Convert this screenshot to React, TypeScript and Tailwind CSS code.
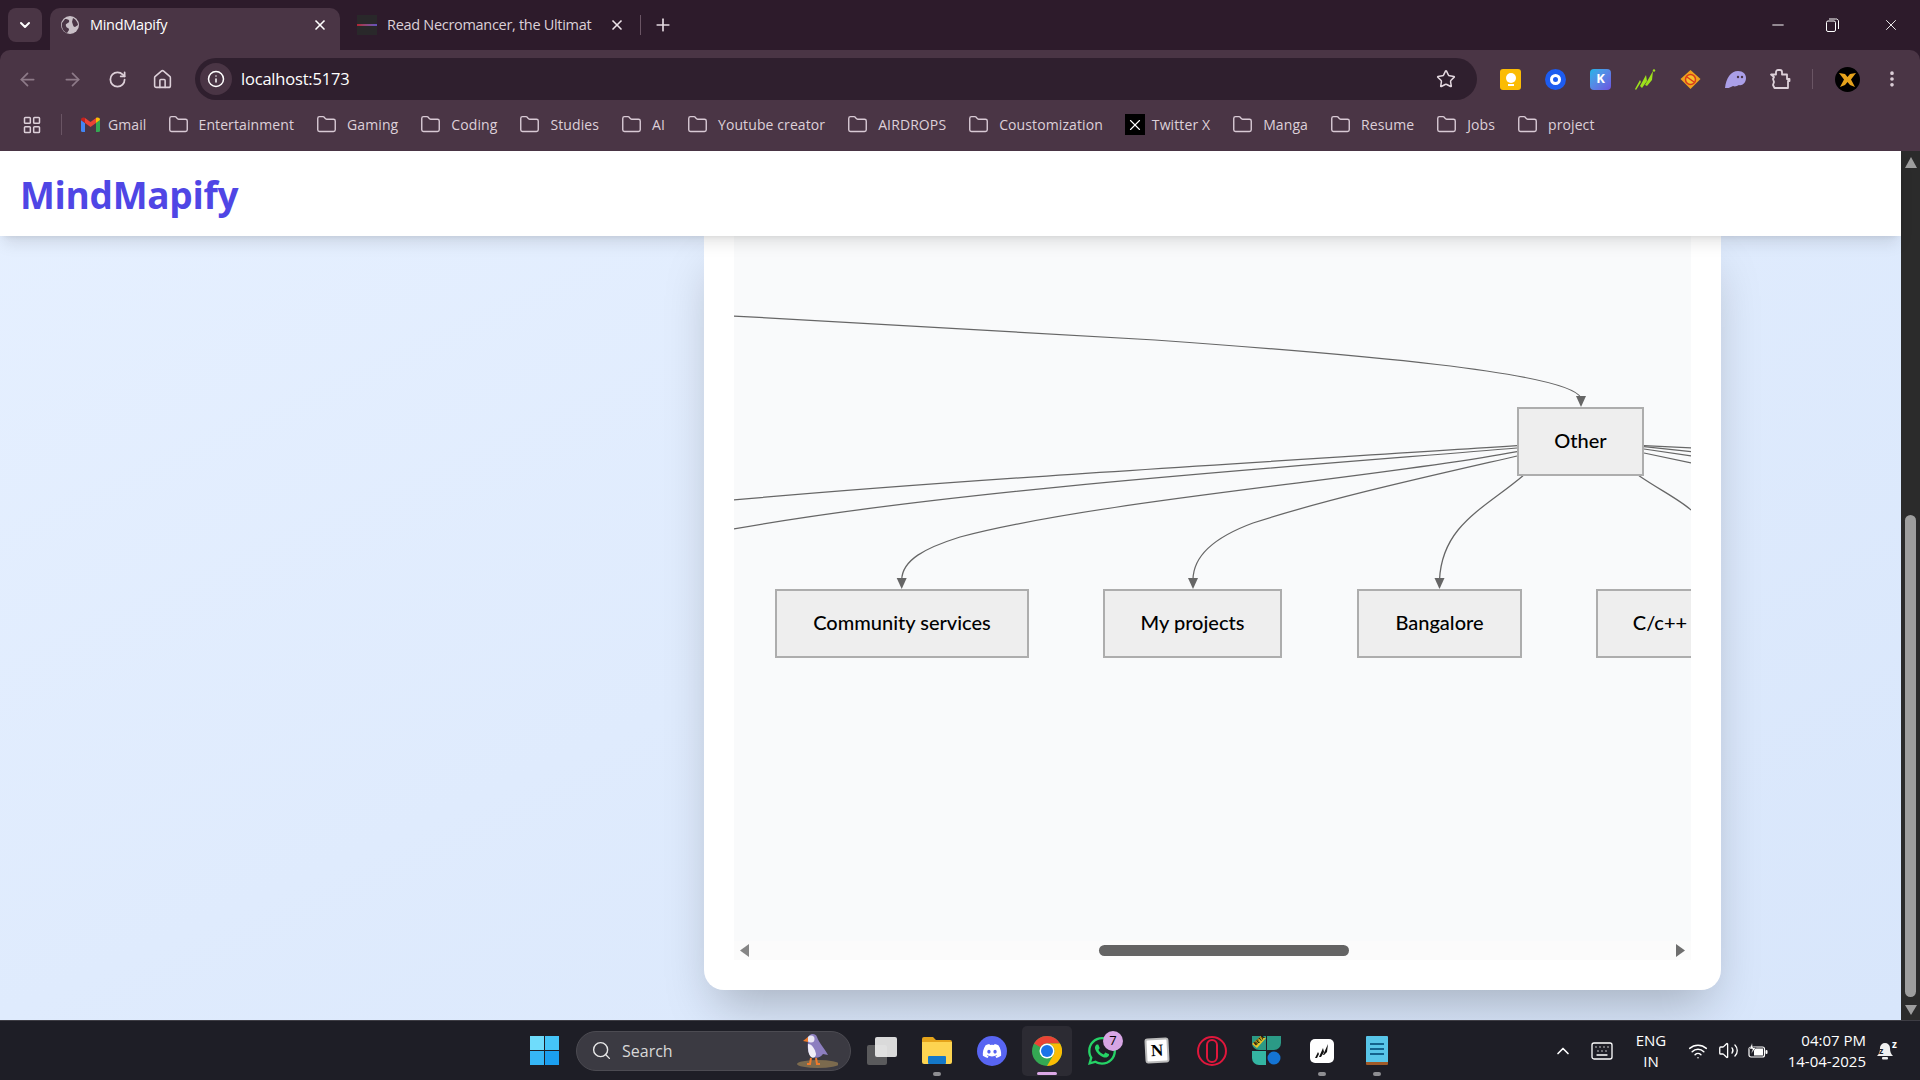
import {
  ArrowLeft,
  ArrowRight,
  ChevronDown,
  ChevronUp,
  Folder,
  Home,
  Info,
  Keyboard,
  LayoutGrid,
  Minus,
  MoreVertical,
  Plus,
  RotateCw,
  Search,
  Star,
  Volume2,
  Wifi,
  X,
} from "lucide-react";
import { FaDiscord, FaWhatsapp } from "react-icons/fa";

const bookmarks = [
  "Entertainment",
  "Gaming",
  "Coding",
  "Studies",
  "AI",
  "Youtube creator",
  "AIRDROPS",
  "Coustomization",
];

const GmailIcon = () => (
  <svg width="19" height="15" viewBox="0 0 19 15">
    <path d="M0 3v10.500A1.500 1.500 0 0 0 1.500 15H4V6z" fill="#4285f4" />
    <path d="M19 3v10.500a1.500 1.500 0 0 1-1.500 1.500H15V6z" fill="#34a853" />
    <path d="M4 6l5.500 4L15 6V1l-5.500 4L4 1z" fill="#ea4335" />
    <path d="M0 3c0-2.500 2.500-3 4-2v5z" fill="#c5221f" />
    <path d="M19 3c0-2.500-2.500-3-4-2v5z" fill="#fbbc04" />
  </svg>
);

const Bookmark = ({ label }: { label: string }) => (
  <div className="flex items-center gap-[10px]">
    <Folder className="h-[21px] w-[21px] text-[#d9cad5]" strokeWidth={1.6} />
    <span>{label}</span>
  </div>
);

const ChromeIcon = () => (
  <svg width="30" height="30" viewBox="0 0 30 30">
    <circle cx="15" cy="15" r="15" fill="#34a853" />
    <path d="M15 0a15 15 0 0 1 13 7.500H15a7.500 7.500 0 0 0-6.500 3.750L2 7.500A15 15 0 0 1 15 0z" fill="#ea4335" />
    <path d="M28 7.500A15 15 0 0 1 15 30l6.500-11.250A7.500 7.500 0 0 0 15 7.500z" fill="#fbbc04" />
    <circle cx="15" cy="15" r="7.500" fill="#fff" />
    <circle cx="15" cy="15" r="6" fill="#1a73e8" />
  </svg>
);

const Puffin = () => (
  <svg width="42" height="38" viewBox="0 0 42 38">
    <ellipse cx="22" cy="33" rx="21" ry="4" fill="#7b6a4e" />
    <path d="M12 8c0-5 7-7 9-2 2 6 8 12 11 18l-5-1c-3 5-12 5-14-1-2-5-1-9-1-14z" fill="#8d7fc0" />
    <path d="M12 13c4 0 7 5 8 10 0 3-3 5-5 3-3-3-3-8-3-13z" fill="#f1eef8" />
    <circle cx="15" cy="8" r="3.500" fill="#e9e5f2" />
    <path d="M12 6L7 10l5 1z" fill="#f07a2b" />
    <path d="M15 27l-1 6h-3M20 27l1 6h3" stroke="#f07a2b" strokeWidth="2" fill="none" />
  </svg>
);

const edges = [
  "M734 316 L1155 340 C1350 354 1570 372 1581 398",
  "M1517 445.700 C1300 460 950 480 734 500",
  "M1517 448 C1300 466 950 490 734 529",
  "M1517 451.700 C1380 478 1100 500 960 537 C925 548 902 560 901.700 580",
  "M1517 456 C1430 476 1330 498 1253 523 C1215 537 1193 555 1193 580",
  "M1523 475.700 C1485 508 1442 525 1439.500 580",
  "M1639 475.700 C1660 490 1680 500 1691 510",
  "M1644 445.700 L1691 448",
  "M1644 446.700 L1691 451.700",
  "M1644 449 L1691 456",
  "M1644 453 L1691 463",
];

const arrowTips = [
  [1581, 407],
  [901.7, 589],
  [1193, 589],
  [1439.5, 589],
];

const nodeClass =
  "absolute flex h-[69px] items-center justify-center border-2 border-[#adadad] bg-[#eeeeee] pb-[3px] text-[20px] font-medium text-black";

export default function App() {
  return (
    <div className="flex h-screen w-full flex-col overflow-hidden bg-[#2d1b2b] font-['Open_Sans',sans-serif]">
      {/* tab strip */}
      <div className="flex h-[50px] shrink-0 items-start pl-[8px] text-[14.500px] text-[#e9dfe6]">
        <div className="mt-[8px] flex h-[34px] w-[34px] items-center justify-center rounded-[8px] bg-[#4a3545]">
          <ChevronDown className="h-[16px] w-[16px] text-white" strokeWidth={3} />
        </div>
        <div className="relative ml-[8px] mt-[8px] flex h-[42px] w-[290px] items-center rounded-t-[10px] bg-[#4a3545] pb-[8px] pl-[11px]">
          <svg width="18" height="18" viewBox="0 0 18 18">
            <circle cx="9" cy="9" r="9" fill="#c9c0c7" />
            <path d="M4 3c3 0 5 1 4 3S4 7 5 10s3 1 3 4l-2 3C3 16 0 12 1 7zM12 2c2 1 5 4 5 7l-3 2c-2 0-2-3-3-5z" fill="#4a3545" />
          </svg>
          <span className="ml-[11px] tracking-[-0.3px] text-white">MindMapify</span>
          <X className="ml-auto mr-[12px] h-[16px] w-[16px] text-white" strokeWidth={2.5} />
        </div>
        <div className="ml-[17px] mt-[15px] flex h-[20px] items-center">
          <div className="flex h-[20px] w-[20px] items-center bg-[#29282a]">
            <div className="h-[2px] w-full bg-gradient-to-r from-[#b02030] to-[#6050c0]" />
          </div>
          <span className="ml-[10px] w-[208px] overflow-hidden whitespace-nowrap tracking-[-0.3px] text-[#dcd0d8]">
            Read Necromancer, the Ultimat
          </span>
          <X className="ml-[14px] h-[16px] w-[16px] text-[#eee4ea]" strokeWidth={2.5} />
          <div className="ml-[15px] h-[20px] w-[1px] bg-[#6a5564]" />
          <Plus className="ml-[12px] h-[20px] w-[20px] text-[#e4dae1]" strokeWidth={2} />
        </div>
        <div className="ml-auto mt-[16px] flex items-center text-white">
          <Minus className="h-[18px] w-[18px]" strokeWidth={1.3} />
          <svg className="ml-[39px]" width="13" height="14" viewBox="0 0 13 14" fill="none" stroke="#fff" strokeWidth="1">
            <rect x="0.500" y="3" width="9" height="10.500" rx="1.500" />
            <path d="M3 1h6.500A2.500 2.500 0 0 1 12.500 4v7" />
          </svg>
          <X className="ml-[43px] mr-[20px] h-[18px] w-[18px]" strokeWidth={1.2} />
        </div>
      </div>

      {/* toolbar and bookmarks */}
      <div className="h-[101px] shrink-0 rounded-t-[10px] bg-[#4a3545]">
        <div className="flex h-[50px] items-center pt-[8px]">
          <ArrowLeft className="ml-[17px] h-[21px] w-[21px] text-[#8d7a88]" strokeWidth={2} />
          <ArrowRight className="ml-[24px] h-[21px] w-[21px] text-[#8d7a88]" strokeWidth={2} />
          <RotateCw className="ml-[25px] h-[19px] w-[19px] text-[#ddd0d9]" strokeWidth={2.2} />
          <Home className="ml-[25px] h-[21px] w-[21px] text-[#ddd0d9]" strokeWidth={1.8} />
        </div>
        <div className="relative -mt-[42px] ml-[195px] flex h-[42px] w-[1282px] items-center rounded-full bg-[#2f1f2e] pl-[5px] pr-[21px]">
          <div className="flex h-[32px] w-[32px] items-center justify-center rounded-full bg-[#4a3545]">
            <Info className="h-[18px] w-[18px] text-white" strokeWidth={2} />
          </div>
          <span className="ml-[9px] text-[16.500px] tracking-[-0.2px] text-white">localhost:5173</span>
          <Star className="ml-auto h-[20px] w-[20px] text-[#e4d8e0]" strokeWidth={1.8} />
        </div>
        <div className="relative -mt-[42px] flex h-[42px] items-center pl-[1500px]">
          <div className="flex h-[21px] w-[21px] flex-col items-center justify-center gap-[1px] rounded-[3px] bg-[#fbbc04]">
            <div className="h-[10px] w-[10px] rounded-full bg-white" />
            <div className="h-[2px] w-[6px] bg-white" />
          </div>
          <div className="ml-[24px] flex h-[21px] w-[21px] items-center justify-center rounded-full bg-[#1d5cf0]">
            <div className="h-[11px] w-[11px] rounded-full border-[3px] border-white" />
          </div>
          <div className="ml-[24px] flex h-[21px] w-[21px] items-center justify-center rounded-[4px] bg-gradient-to-br from-[#10b5e8] to-[#6a50e0] text-[13px] font-bold text-white">
            K
          </div>
          <svg className="ml-[24px]" width="21" height="21" viewBox="0 0 21 21">
            <path d="M0 20l5-9 1 2-5 8zM5 17l6-11 1 6-5 7zM10 16l8-14-1 9-5 6z" fill="#9de21c" />
            <circle cx="19" cy="1.500" r="1.200" fill="#9de21c" />
          </svg>
          <svg className="ml-[24px]" width="21" height="21" viewBox="0 0 21 21">
            <path d="M10.500 1l10 9-10 10-10-10z" fill="#f0a21c" />
            <circle cx="10.500" cy="10.500" r="5" fill="#f5c02c" stroke="#d93a1c" strokeWidth="1.500" />
            <path d="M7 8l7 5" stroke="#d93a1c" strokeWidth="1.500" />
          </svg>
          <svg className="ml-[24px]" width="21" height="17" viewBox="0 0 21 17">
            <path d="M0 17C1 7 6 0 13 0c5 0 8 3 8 7 0 5-4 8-7 7-2 1-4 2-6 1-2 1-5 3-8 2z" fill="#ab9fe8" />
            <circle cx="13" cy="6" r="1.200" fill="#4a3545" />
            <circle cx="17" cy="6" r="1.200" fill="#4a3545" />
          </svg>
          <svg className="ml-[24px]" width="21" height="21" viewBox="0 0 21 21" fill="none" stroke="#ddd0d9" strokeWidth="1.800" strokeLinejoin="round">
            <path d="M1 5.500h5V3a2 2 0 0 1 2-2h2a2 2 0 0 1 2 2v2.500h5v4.500h2.500v2H18v7H4.500l-1.500-3 1-3-1-3 1-2z" />
          </svg>
          <div className="ml-[21px] h-[20px] w-[1px] bg-[#6a5564]" />
          <svg className="ml-[22px]" width="25" height="25" viewBox="0 0 25 25">
            <circle cx="12.500" cy="12.500" r="12.500" fill="#000" />
            <path d="M4 6l6 1 2.500 3L15 7l6-1-5 6.500L20 20l-5-2-2.500-3-2.500 3-5 2 4-7.500z" fill="#e5a21b" />
          </svg>
          <MoreVertical className="ml-[22px] h-[20px] w-[20px] text-[#ddd0d9]" strokeWidth={2.4} />
        </div>
        <div className="flex h-[51px] items-center whitespace-nowrap pb-[2px] text-[14px] tracking-[0.1px] text-[#ddd0d9]">
          <LayoutGrid className="ml-[22px] h-[20px] w-[20px]" strokeWidth={1.8} />
          <div className="ml-[19px] h-[21px] w-[1px] bg-[#6a5564]" />
          <div className="ml-[19px] flex items-center gap-[8px]">
            <GmailIcon />
            <span>Gmail</span>
          </div>
          <div className="ml-[21px] flex items-center gap-[22px]">
            {bookmarks.map((b) => (
              <Bookmark key={b} label={b} />
            ))}
            <div className="flex items-center gap-[7px]">
              <div className="flex h-[21px] w-[20px] items-center justify-center bg-black">
                <X className="h-[18px] w-[18px] text-white" strokeWidth={1.500} />
              </div>
              <span>Twitter X</span>
            </div>
            <Bookmark label="Manga" />
            <Bookmark label="Resume" />
            <Bookmark label="Jobs" />
            <Bookmark label="project" />
          </div>
        </div>
      </div>

      {/* page */}
      <div className="flex h-[869px] shrink-0">
        <div className="flex w-[1901px] flex-col bg-gradient-to-br from-[#e6f0ff] to-[#d8e6fb]">
          <header className="relative z-10 flex h-[85px] shrink-0 items-center bg-white pl-[20px] pt-[2px] shadow-lg">
            <h1 className="text-[37px] font-bold tracking-[-0.3px] text-[#4f46e5]">MindMapify</h1>
          </header>
          <main className="h-[784px] pb-[30px] pl-[704px] pr-[180px]">
            <div className="flex h-full flex-col rounded-b-[20px] bg-white px-[30px] shadow-2xl">
              <div className="relative h-[705px] overflow-hidden bg-[#f9fafb] font-['Lato',sans-serif]">
                <svg className="absolute inset-0" width="957" height="705" viewBox="734 236 957 705" fill="none">
                  {edges.map((d) => (
                    <path key={d} d={d} stroke="#666666" strokeWidth="1.250" />
                  ))}
                  {arrowTips.map(([x, y]) => (
                    <path key={x} d={`M${x} ${y}l-5-11h10z`} fill="#666666" />
                  ))}
                </svg>
                <div className={`${nodeClass} left-[783px] top-[171px] w-[127px]`}>Other</div>
                <div className={`${nodeClass} left-[41px] top-[353px] w-[254px]`}>Community services</div>
                <div className={`${nodeClass} left-[369px] top-[353px] w-[179px]`}>My projects</div>
                <div className={`${nodeClass} left-[623px] top-[353px] w-[165px]`}>Bangalore</div>
                <div className={`${nodeClass} left-[862px] top-[353px] w-[128px]`}>C/c++</div>
              </div>
              <div className="flex h-[19px] items-center bg-[#fbfbfb] pl-[6px]">
                <svg width="9" height="13" viewBox="0 0 9 13">
                  <path d="M9 0v13L0 6.500z" fill="#858585" />
                </svg>
                <div className="ml-[350px] h-[11px] w-[250px] rounded-full bg-[#636363]" />
                <svg className="ml-[327px]" width="9" height="13" viewBox="0 0 9 13">
                  <path d="M0 0v13l9-6.500z" fill="#6e6e6e" />
                </svg>
              </div>
            </div>
          </main>
        </div>
        <div className="flex w-[19px] flex-col bg-[#2b2b2b] pl-[4px]">
          <svg className="mt-[6px]" width="12" height="11" viewBox="0 0 12 11">
            <path d="M6 0l6 11H0z" fill="#9e9e9e" />
          </svg>
          <div className="mt-[347px] h-[482px] w-[11px] rounded-full bg-[#9e9e9e]" />
          <svg className="mt-[8px]" width="12" height="10" viewBox="0 0 12 10">
            <path d="M0 0h12L6 10z" fill="#9e9e9e" />
          </svg>
        </div>
      </div>

      {/* taskbar */}
      <footer className="flex h-[60px] shrink-0 items-center border-t border-[#3e3d44] bg-[#1e1e26] pl-[517px] text-white">
        <div className="flex w-[55px] justify-center">
          <div className="grid h-[29px] w-[29px] grid-cols-2 gap-[1px]">
            <div className="bg-[#6fdcfb]" />
            <div className="bg-[#45c5f8]" />
            <div className="bg-[#36b6f6]" />
            <div className="bg-[#1b9ff0]" />
          </div>
        </div>
        <div className="ml-[4px] flex h-[40px] w-[275px] items-center rounded-full border border-[#4c4b52] bg-[#3b3a42] pl-[14px]">
          <Search className="h-[21px] w-[21px] text-[#e8e8e8]" strokeWidth={1.6} />
          <span className="ml-[10px] text-[16px] text-[#d8d8d8]">Search</span>
          <div className="ml-auto mr-[12px] -mt-[2px]">
            <Puffin />
          </div>
        </div>
        <div className="ml-[3px] flex w-[55px] justify-center">
          <div className="relative h-[28px] w-[30px]">
            <div className="absolute bottom-0 left-0 h-[20px] w-[20px] rounded-[2px] bg-[#5a5a5c]" />
            <div className="absolute right-0 top-0 h-[20px] w-[22px] rounded-[2px] bg-[#eeeeee] opacity-90" />
          </div>
        </div>
        <div className="relative flex h-[50px] w-[55px] items-center justify-center">
          <svg width="30" height="27" viewBox="0 0 30 27">
            <path d="M0 2a2 2 0 0 1 2-2h9l3 3h14a2 2 0 0 1 2 2v2H0z" fill="#e5a41b" />
            <path d="M0 5h30v20a2 2 0 0 1-2 2H2a2 2 0 0 1-2-2z" fill="#fdd451" />
            <rect x="6" y="19" width="18" height="8" rx="1" fill="#1478c8" />
          </svg>
          <div className="absolute bottom-0 h-[4px] w-[8px] rounded-full bg-[#8e8e92]" />
        </div>
        <div className="flex w-[55px] justify-center">
          <div className="flex h-[30px] w-[30px] items-center justify-center rounded-full bg-[#5865f2]">
            <FaDiscord className="h-[20px] w-[20px] text-white" />
          </div>
        </div>
        <div className="relative mx-[2.500px] flex h-[50px] w-[50px] items-center justify-center rounded-[5px] bg-[#2c2b33]">
          <ChromeIcon />
          <div className="absolute bottom-[1px] h-[3px] w-[20px] rounded-full bg-[#dba8e6]" />
        </div>
        <div className="relative flex w-[55px] justify-center">
          <FaWhatsapp className="h-[32px] w-[32px] text-[#25d366]" />
          <div className="absolute -top-[4px] left-[29px] flex h-[20px] w-[20px] items-center justify-center rounded-full bg-[#d7a5e4] text-[13px] text-black">
            7
          </div>
        </div>
        <div className="flex w-[55px] justify-center">
          <div className="flex h-[25px] w-[24px] rotate-[-3deg] items-center justify-center rounded-[3px] border-2 border-[#bbbbbb] bg-white font-['Liberation_Serif',serif] text-[17px] font-bold text-black">
            N
          </div>
        </div>
        <div className="flex w-[55px] justify-center">
          <div className="flex h-[30px] w-[30px] items-center justify-center rounded-full border-2 border-[#e0173c]">
            <div className="h-[24px] w-[12px] rounded-full border-2 border-[#e0173c]" />
          </div>
        </div>
        <div className="flex w-[55px] justify-center">
          <div className="relative h-[29px] w-[29px]">
            <svg width="29" height="29" viewBox="0 0 29 29">
              <path d="M0 0h14v14H7a7 7 0 0 1-7-7zM15 0h14v7a7 7 0 0 1-7 7h-7z" fill="#2b9a86" />
              <path d="M0 15h14v14H7a7 7 0 0 1-7-7z" fill="#34b5a2" />
              <circle cx="22" cy="22" r="6.500" fill="#1474d4" />
              <path d="M0 8L9 0l5 2-9 10z" fill="#e8c22c" />
            </svg>
            <span className="absolute left-[1px] top-[2px] rotate-[-40deg] text-[5px] font-bold leading-none text-black">BETA</span>
          </div>
        </div>
        <div className="relative flex h-[50px] w-[55px] items-center justify-center">
          <div className="flex h-[24px] w-[24px] items-center justify-center rounded-[5px] bg-white">
            <svg width="16" height="16" viewBox="0 0 16 16">
              <path d="M1 15l3-6 1 2-2 4zM5 14l4-9 1 4-3 5zM9 12l5-11-1 8-3 3z" fill="#111111" />
            </svg>
          </div>
          <div className="absolute bottom-0 h-[4px] w-[8px] rounded-full bg-[#8e8e92]" />
        </div>
        <div className="relative flex h-[50px] w-[55px] items-center justify-center">
          <div className="flex h-[29px] w-[22px] flex-col justify-center gap-[3px] rounded-[1px] border-b-[3px] border-[#a05a28] bg-[#58c5e8] px-[4px]">
            <div className="h-[2px] bg-[#14628c]" />
            <div className="h-[2px] bg-[#14628c]" />
            <div className="h-[2px] bg-[#14628c]" />
          </div>
          <div className="absolute bottom-0 h-[4px] w-[8px] rounded-full bg-[#8e8e92]" />
        </div>

        <div className="ml-[144px] flex w-[30px] justify-center">
          <ChevronUp className="h-[20px] w-[20px]" strokeWidth={2} />
        </div>
        <div className="ml-[4px] flex w-[40px] justify-center">
          <Keyboard className="h-[24px] w-[24px]" strokeWidth={1.3} />
        </div>
        <div className="ml-[4px] w-[50px] text-center text-[15px] leading-[21px]">
          <div>ENG</div>
          <div>IN</div>
        </div>
        <div className="ml-[7px] flex w-[30px] justify-center">
          <Wifi className="h-[20px] w-[20px]" strokeWidth={1.8} />
        </div>
        <div className="flex w-[30px] justify-center">
          <Volume2 className="h-[21px] w-[21px]" strokeWidth={1.5} />
        </div>
        <div className="flex w-[30px] justify-center">
          <svg width="20" height="16" viewBox="0 0 20 16" fill="none">
            <rect x="1" y="4" width="15.500" height="10" rx="2" stroke="#fff" strokeWidth="1.200" />
            <rect x="6" y="5.500" width="9" height="7" fill="#fff" />
            <rect x="17.500" y="7" width="2" height="4" rx="1" fill="#fff" />
            <path d="M4 0L1.500 6h3L3 11l5-6.500H5z" fill="#fff" stroke="#1e1e26" strokeWidth="0.500" />
          </svg>
        </div>
        <div className="w-[93px] text-right text-[15px] leading-[21px]">
          <div>04:07 PM</div>
          <div>14-04-2025</div>
        </div>
        <div className="relative ml-[7px] flex w-[24px] justify-center">
          <svg width="16" height="18" viewBox="0 0 16 18">
            <path d="M8 1a5 5 0 0 0-5 5c0 4-1 6-3 8h16c-2-2-3-4-3-8a5 5 0 0 0-5-5z" fill="#f0f0f0" />
            <rect x="5" y="15" width="6" height="2.500" rx="1" fill="#f0f0f0" />
          </svg>
          <span className="absolute left-[6px] top-[4px] text-[9px] font-bold leading-none text-[#1e1e26]">z</span>
          <span className="absolute -top-[3px] right-0 text-[10px] font-bold leading-none">z</span>
        </div>
      </footer>
    </div>
  );
}
